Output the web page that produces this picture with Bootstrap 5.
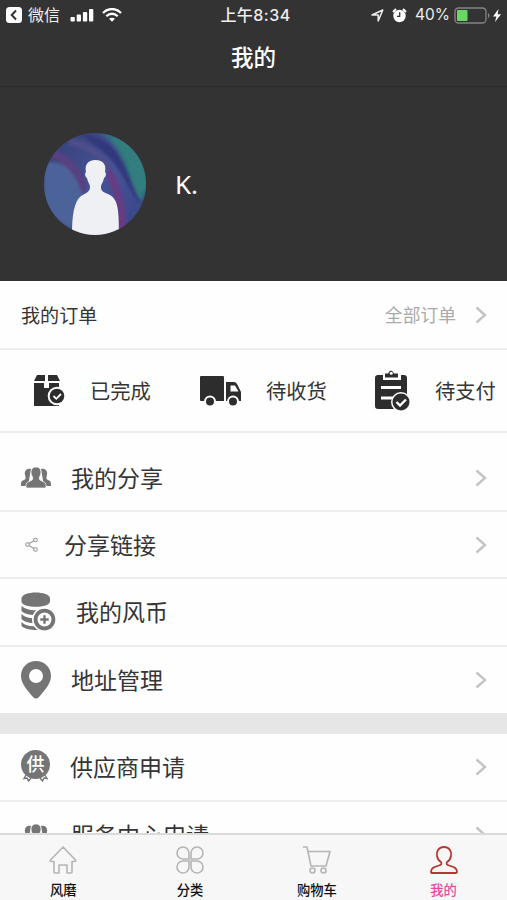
<!DOCTYPE html>
<html lang="zh-CN">
<head>
<meta charset="utf-8">
<meta name="viewport" content="width=device-width, initial-scale=1">
<title>我的</title>
<link href="https://cdn.jsdelivr.net/npm/bootstrap@5.3.0/dist/css/bootstrap.min.css" rel="stylesheet">
<style>
body{font-family:Inter,"Noto Sans CJK SC",sans-serif;background:#fefefe;color:#353535}
.screen{height:900px;overflow:hidden}
.dark{background:#333;color:#fff}
svg{display:block;flex:none}
.statusbar{height:30px;font-size:16px;line-height:30px;color:#eee}
.statusbar>div{flex:1 1 0}
.back{margin-left:2px;margin-right:6px}
.percent{font-size:15.500px;margin-right:4px}
.bolt{margin-left:3px}
.status-right{padding-right:6px}
.clock{font-weight:500;font-size:16px;letter-spacing:.45px;padding-left:6px}
.page-title{height:57px;line-height:55px;font-size:22.5px;font-weight:500;border-bottom:1px solid #2b2929}
.profile{height:194px;padding-left:44px;gap:29px}
.nick{font-family:"Noto Sans",sans-serif;font-size:26px}
.order-head{height:69px;padding:0 20px 0 21px;font-size:19.100px;border-bottom:2px solid #ededed}
.order-head .lbl{padding-top:4px}
.all-orders{font-size:17.8px;color:#aaa;gap:19px}
.orders{height:83px;font-size:20.3px;padding-left:33px;border-bottom:2px solid #ededed}
.orders .lbl{padding-top:4px}
.done{width:166px}.shipping{width:175px}
.menu{padding-top:12px}
.cell{height:67.2px;padding:0 20px 0 21px;font-size:23px;border-bottom:2px solid #ededed}
.cell .lbl{padding-top:3px}
.menu .cell:last-child{height:66.400px}
.apply .cell{height:68px}
.ico{color:#757575}
.w50{width:50px}.w43{width:43px;padding-left:4px}.w55{width:55px}.w49{width:49px}
.partial{padding-left:3px}
.divider{height:21px;background:#e6e6e6}
.tabs{height:67px;background:#f7f7f7;border-top:2px solid #dadada;font-size:13.3px;font-weight:500;color:#111}
.tabs .tab{line-height:20px;padding-top:10px;color:#111;text-decoration:none}
.tabs svg{margin-bottom:5px}
.tabs .tab.current{color:#e64ba0}
.flow{min-height:0;overflow:hidden}
</style>
<script src="https://cdn.jsdelivr.net/npm/bootstrap@5.3.0/dist/js/bootstrap.bundle.min.js"></script>
</head>
<body>
<svg width="0" height="0" class="position-absolute" aria-hidden="true">
<symbol id="chev" viewBox="0 0 12 18"><path d="M1.500 1.500 10 9l-8.500 7.500" fill="none" stroke="#c4c4c4" stroke-width="2.400"/></symbol>
<symbol id="people" viewBox="0 0 30 22"><g fill="#757575"><path d="M10 2C6 1 3 4 4 8c1 3 1 4-1 5-3 1-3 2-3 6h7zM20 2c4-1 7 2 6 6-1 3-1 4 1 5 3 1 3 2 3 6h-7z"/><path d="M15 0c5 0 6 5 4 9-1 2-1 3 0 4l4 2c2 1 2 3 2 6H5c0-3 0-5 2-6l4-2c1-1 1-2 0-4-2-4-1-9 4-9z" stroke="#fefefe" stroke-width=".7"/></g></symbol>
</svg>
<main class="screen d-flex flex-column">
<header class="dark flex-shrink-0">
<div class="statusbar d-flex align-items-center">
<div class="d-flex align-items-center ps-1">
<svg class="back" width="16" height="16" viewBox="0 0 16 16"><rect width="16" height="16" rx="3.500" fill="#fff"/><path d="M10 3.500 5.700 8l4.300 4.500" fill="none" stroke="#333" stroke-width="2"/></svg>
<span>微信</span>
<svg class="ms-2" width="26" height="14" viewBox="0 0 26 14" fill="#fff"><rect x="2.500" y="9" width="4.300" height="4.500" rx="1"/><rect x="8.700" y="6.500" width="4.300" height="7" rx="1"/><rect x="14.900" y="4" width="4.300" height="9.500" rx="1"/><rect x="21" y="1" width="4.300" height="12.500" rx="1"/></svg>
<svg class="ms-2" width="20" height="14" viewBox="0 0 20 14" fill="none" stroke="#fff" stroke-width="2.300"><path d="M1 5C6-.3 14-.3 19 5M4.300 8.200c3.300-3.300 8.100-3.300 11.400 0"/><path d="m7 10.800c2-1.500 4-1.500 6 0l-3 3z" fill="#fff" stroke="none"/></svg>
</div>
<div class="clock text-center">上午8:34</div>
<div class="status-right d-flex align-items-center justify-content-end">
<svg width="13" height="13" viewBox="0 0 13 13"><path d="M11.800 1 7.200 12V6H1z" fill="none" stroke="#eee" stroke-width="1.500" stroke-linejoin="round"/></svg>
<svg class="ms-2" width="15" height="15" viewBox="0 0 15 15"><circle cx="7.500" cy="8" r="6.200" fill="#fff"/><path d="M7.700 4.300v4H5" fill="none" stroke="#333" stroke-width="1.300"/><path d="M1 4 4 1M11 1l3 3" stroke="#fff" stroke-width="2"/></svg>
<span class="percent ms-2">40%</span>
<svg width="36" height="17" viewBox="0 0 36 17"><rect x="1" y="1" width="31" height="15" rx="3.500" fill="none" stroke="#858585" stroke-width="1.300"/><rect x="3" y="3" width="10.500" height="11" rx="1" fill="#68d765"/><path d="M34 6c2 1 2 4 0 5z" fill="#858585"/></svg>
<svg class="bolt" width="8" height="13" viewBox="0 0 8 13"><path d="M5.500 0 0 7.500h3.300L2 13l6-7.700H4.600z" fill="#fff"/></svg>
</div>
</div>
<div class="page-title text-center">我的</div>
<section class="profile d-flex align-items-center">
<svg width="102" height="102" viewBox="0 0 102 102">
<defs><clipPath id="disc"><circle cx="51" cy="51" r="51"/></clipPath><filter id="soft"><feGaussianBlur stdDeviation="1.500"/></filter><linearGradient id="sea" x1="0" y1="0" x2="1" y2="1"><stop stop-color="#343c70"/><stop offset=".5" stop-color="#465498"/><stop offset="1" stop-color="#354485"/></linearGradient></defs>
<g clip-path="url(#disc)"><rect width="102" height="102" fill="url(#sea)"/>
<g filter="url(#soft)"><path d="M0 30C22 25 38 45 39 62L24 102 0 82z" fill="#4b6398"/><path d="M10 17C26 22 40 38 43 55L38 61C32 40 20 30 7 25z" fill="#584082"/><path d="M25 5C45 8 72 25 75 55L66 38C57 24 40 15 25 12z" fill="#504d8b"/><path d="M56 0C80 14 80 42 97 68L110 50 90 0z" fill="#316d80"/><path d="M66 6C86 22 84 44 95 66L110 40 85 0z" fill="#337d7e"/><path d="M36 0C68 4 78 22 88 50L98 72C83 60 79 30 50 12z" fill="#30397b"/><path d="M64 34C77 49 83 74 82 96L72 98C76 75 71 60 63 45z" fill="#673b82"/><path d="M0 76C14 88 20 92 32 100L10 102z" fill="#26336d"/></g>
<path d="M51.500 27c8 0 11 5 9.500 12 1.500 1 1 5-1 6-1 5-3 6-3 9 0 5 3 5 9 8 8 5 9 14 9 40H28c0-20 2-33 9-39 5-3 9-4 9-9 0-3-2-4-3-9-2-1-2.500-5-1-6-1.500-7 1.500-12 9.500-12z" fill="#eff0f3"/></g></svg>
<span class="nick">K.</span>
</section>
</header>
<div class="flow flex-grow-1">
<section class="order-head d-flex align-items-center justify-content-between">
<span class="lbl">我的订单</span>
<span class="all-orders d-flex align-items-center"><span class="lbl">全部订单</span><svg width="12" height="18"><use href="#chev"/></svg></span>
</section>
<section class="orders d-flex align-items-center">
<div class="done d-flex align-items-center">
<svg width="33" height="34" viewBox="0 0 33 34"><path d="M4 1h8v6H1zM15 1h9l3 6H15zM1 9h10v5h5V9h10v23H1z" fill="#2d2d2d"/><circle cx="24" cy="22" r="9.300" fill="#fefefe"/><circle cx="24" cy="22" r="7.300" fill="#2d2d2d"/><path d="m20.500 22 2.800 2.800 4.700-4.800" fill="none" stroke="#fff" stroke-width="1.800"/></svg>
<span class="lbl ms-4">已完成</span></div>
<div class="shipping d-flex align-items-center">
<svg width="43" height="32" viewBox="0 0 43 32"><path d="M2 1h22q1 0 1 1v24H2q-1 0-1-1V2q0-1 1-1zM27 7h8q2 0 3 2l4 8v9H27z" fill="#2d2d2d"/><path d="M31.500 10.500H36l3.500 6h-8z" fill="#fefefe"/><g fill="#2d2d2d" stroke="#fefefe" stroke-width="2"><circle cx="11" cy="26.500" r="5"/><circle cx="34" cy="26.500" r="5"/></g></svg>
<span class="lbl ms-4">待收货</span></div>
<div class="d-flex align-items-center">
<svg width="37" height="43" viewBox="0 0 37 43"><path d="M4 6h5v5h18V6h3q3 0 3 3v28q0 3-3 3H4q-3 0-3-3V9q0-3 3-3z" fill="#2d2d2d"/><path d="M11 8.500V4.500h3q3-6 6 0h4v4z" fill="#2d2d2d"/><circle cx="17.200" cy="4.200" r="1.500" fill="#fff"/><path d="M7 18.500h20M7 29h13" stroke="#fefefe" stroke-width="3"/><circle cx="27" cy="33" r="10" fill="#fefefe"/><circle cx="27" cy="33" r="8.500" fill="#2d2d2d"/><path d="m22.500 33 3.500 3.500 6-6" fill="none" stroke="#fff" stroke-width="2.400"/></svg>
<span class="lbl ms-4 text-nowrap">待支付</span></div>
</section>
<section class="menu">
<div class="cell d-flex align-items-center"><div class="ico w50"><svg width="30" height="22"><use href="#people"/></svg></div><span class="lbl flex-grow-1">我的分享</span><svg width="12" height="18"><use href="#chev"/></svg></div>
<div class="cell d-flex align-items-center"><div class="ico w43"><svg width="14" height="15" viewBox="0 0 14 15" fill="none" stroke="#999" stroke-width="1.100"><circle cx="2.500" cy="7.500" r="1.800"/><circle cx="10.500" cy="3" r="1.800"/><circle cx="10.500" cy="12.500" r="1.800"/><path d="m4 6.500 5-2.700M4 8.500l5 3"/></svg></div><span class="lbl flex-grow-1">分享链接</span><svg width="12" height="18"><use href="#chev"/></svg></div>
<div class="cell d-flex align-items-center"><div class="ico w55"><svg width="35" height="39" viewBox="0 0 35 39"><g fill="#757575"><path d="M.5 6.500C.5-1.500 29-1.500 29 6.500v3c0 7-28.500 7-28.500 0z"/><path d="M.5 14c6 5 15 5 20 3v5c-6 2-16 1-20-3zM.5 22c4 4 10 5 20 4v5c-8 1-16 0-20-4zM.5 30c4 4 10 5 20 4l4 3c-8 2-20 1-24-3z"/></g><circle cx="23.500" cy="27.500" r="12.500" fill="#fefefe"/><circle cx="23.500" cy="27.500" r="8.900" fill="none" stroke="#757575" stroke-width="3.800"/><path d="M23.500 23.300v8.400M19.300 27.500h8.400" stroke="#757575" stroke-width="2.400"/></svg></div><span class="lbl">我的风币</span></div>
<div class="cell d-flex align-items-center border-bottom-0"><div class="ico w50"><svg width="30" height="38" viewBox="0 0 30 38"><path fill-rule="evenodd" fill="#757575" d="M15 0c8 0 15 6 15 15 0 8-7 15-12 21-2 2-4 2-6 0C7 30 0 23 0 15 0 6 7 0 15 0zm0 8a7 7 0 1 0 0 14 7 7 0 0 0 0-14z"/></svg></div><span class="lbl flex-grow-1">地址管理</span><svg width="12" height="18"><use href="#chev"/></svg></div>
</section>
<div class="divider"></div>
<section class="apply">
<div class="cell d-flex align-items-center"><div class="ico w49"><svg width="30" height="33" viewBox="0 0 30 33"><path d="m5 25-2 3.500 3-.5 1.500 3 2.500-3M24 25l2 3.500-3-.5-1.500 3-2.500-3" fill="none" stroke="#757575" stroke-width="1.400"/><circle cx="14.500" cy="14.500" r="14.500" fill="#757575"/><text x="14.500" y="21" text-anchor="middle" font-size="18" font-weight="500" fill="#fff">供</text></svg></div><span class="lbl flex-grow-1">供应商申请</span><svg width="12" height="18"><use href="#chev"/></svg></div>
<div class="cell d-flex align-items-center"><div class="ico w50 partial"><svg width="24" height="22" viewBox="3 0 24 22"><use href="#people" width="30" height="22"/></svg></div><span class="lbl flex-grow-1">服务中心申请</span><svg width="12" height="18"><use href="#chev"/></svg></div>
</section>
</div>
<nav class="tabs d-flex flex-shrink-0">
<a class="tab col-3 d-flex flex-column align-items-center"><svg width="28" height="30" viewBox="0 0 28 30" fill="none" stroke="#b5b5b5" stroke-width="1.600" stroke-linejoin="round"><path d="M14 2 1.500 15q-.8 1.500 1 1.500H5V27q0 1 1 1h4v-8h8v8h4q1 0 1-1V16.500h2.500q1.800 0 1-1.500z"/></svg>风磨</a>
<a class="tab col-3 d-flex flex-column align-items-center"><svg width="28" height="30" viewBox="0 0 28 30" fill="none" stroke="#b5b5b5" stroke-width="1.600"><path d="M13 14H7a6 6 0 1 1 6-6zM15 14h6a6 6 0 1 0-6-6zM13 16H7a6 6 0 1 0 6 6zM15 16h6a6 6 0 1 1-6 6z"/></svg>分类</a>
<a class="tab col-3 d-flex flex-column align-items-center"><svg width="28" height="30" viewBox="0 0 28 30" fill="none" stroke="#b5b5b5" stroke-width="1.600" stroke-linejoin="round"><path d="M0 2h4l4 19h15l4-14.500H5"/><circle cx="9.500" cy="25.500" r="2.500"/><circle cx="20.500" cy="25.500" r="2.500"/></svg>购物车</a>
<a class="tab current col-3 d-flex flex-column align-items-center"><svg width="28" height="30" viewBox="0 0 28 30" fill="none" stroke="#b53835" stroke-width="1.800" stroke-linejoin="round"><path d="M14 2c5 0 8 4 7 9-.5 3-2 5-4 6-1 2 0 3 2 3.500 5 1.500 8 2.500 8 6.500 0 1-.5 1-1.500 1h-23c-1 0-1.500 0-1.500-1 0-4 3-5 8-6.500 2-.5 3-1.500 2-3.500-2-1-3.500-3-4-6-1-5 2-9 7-9z"/></svg>我的</a>
</nav>
</main>
</body>
</html>
